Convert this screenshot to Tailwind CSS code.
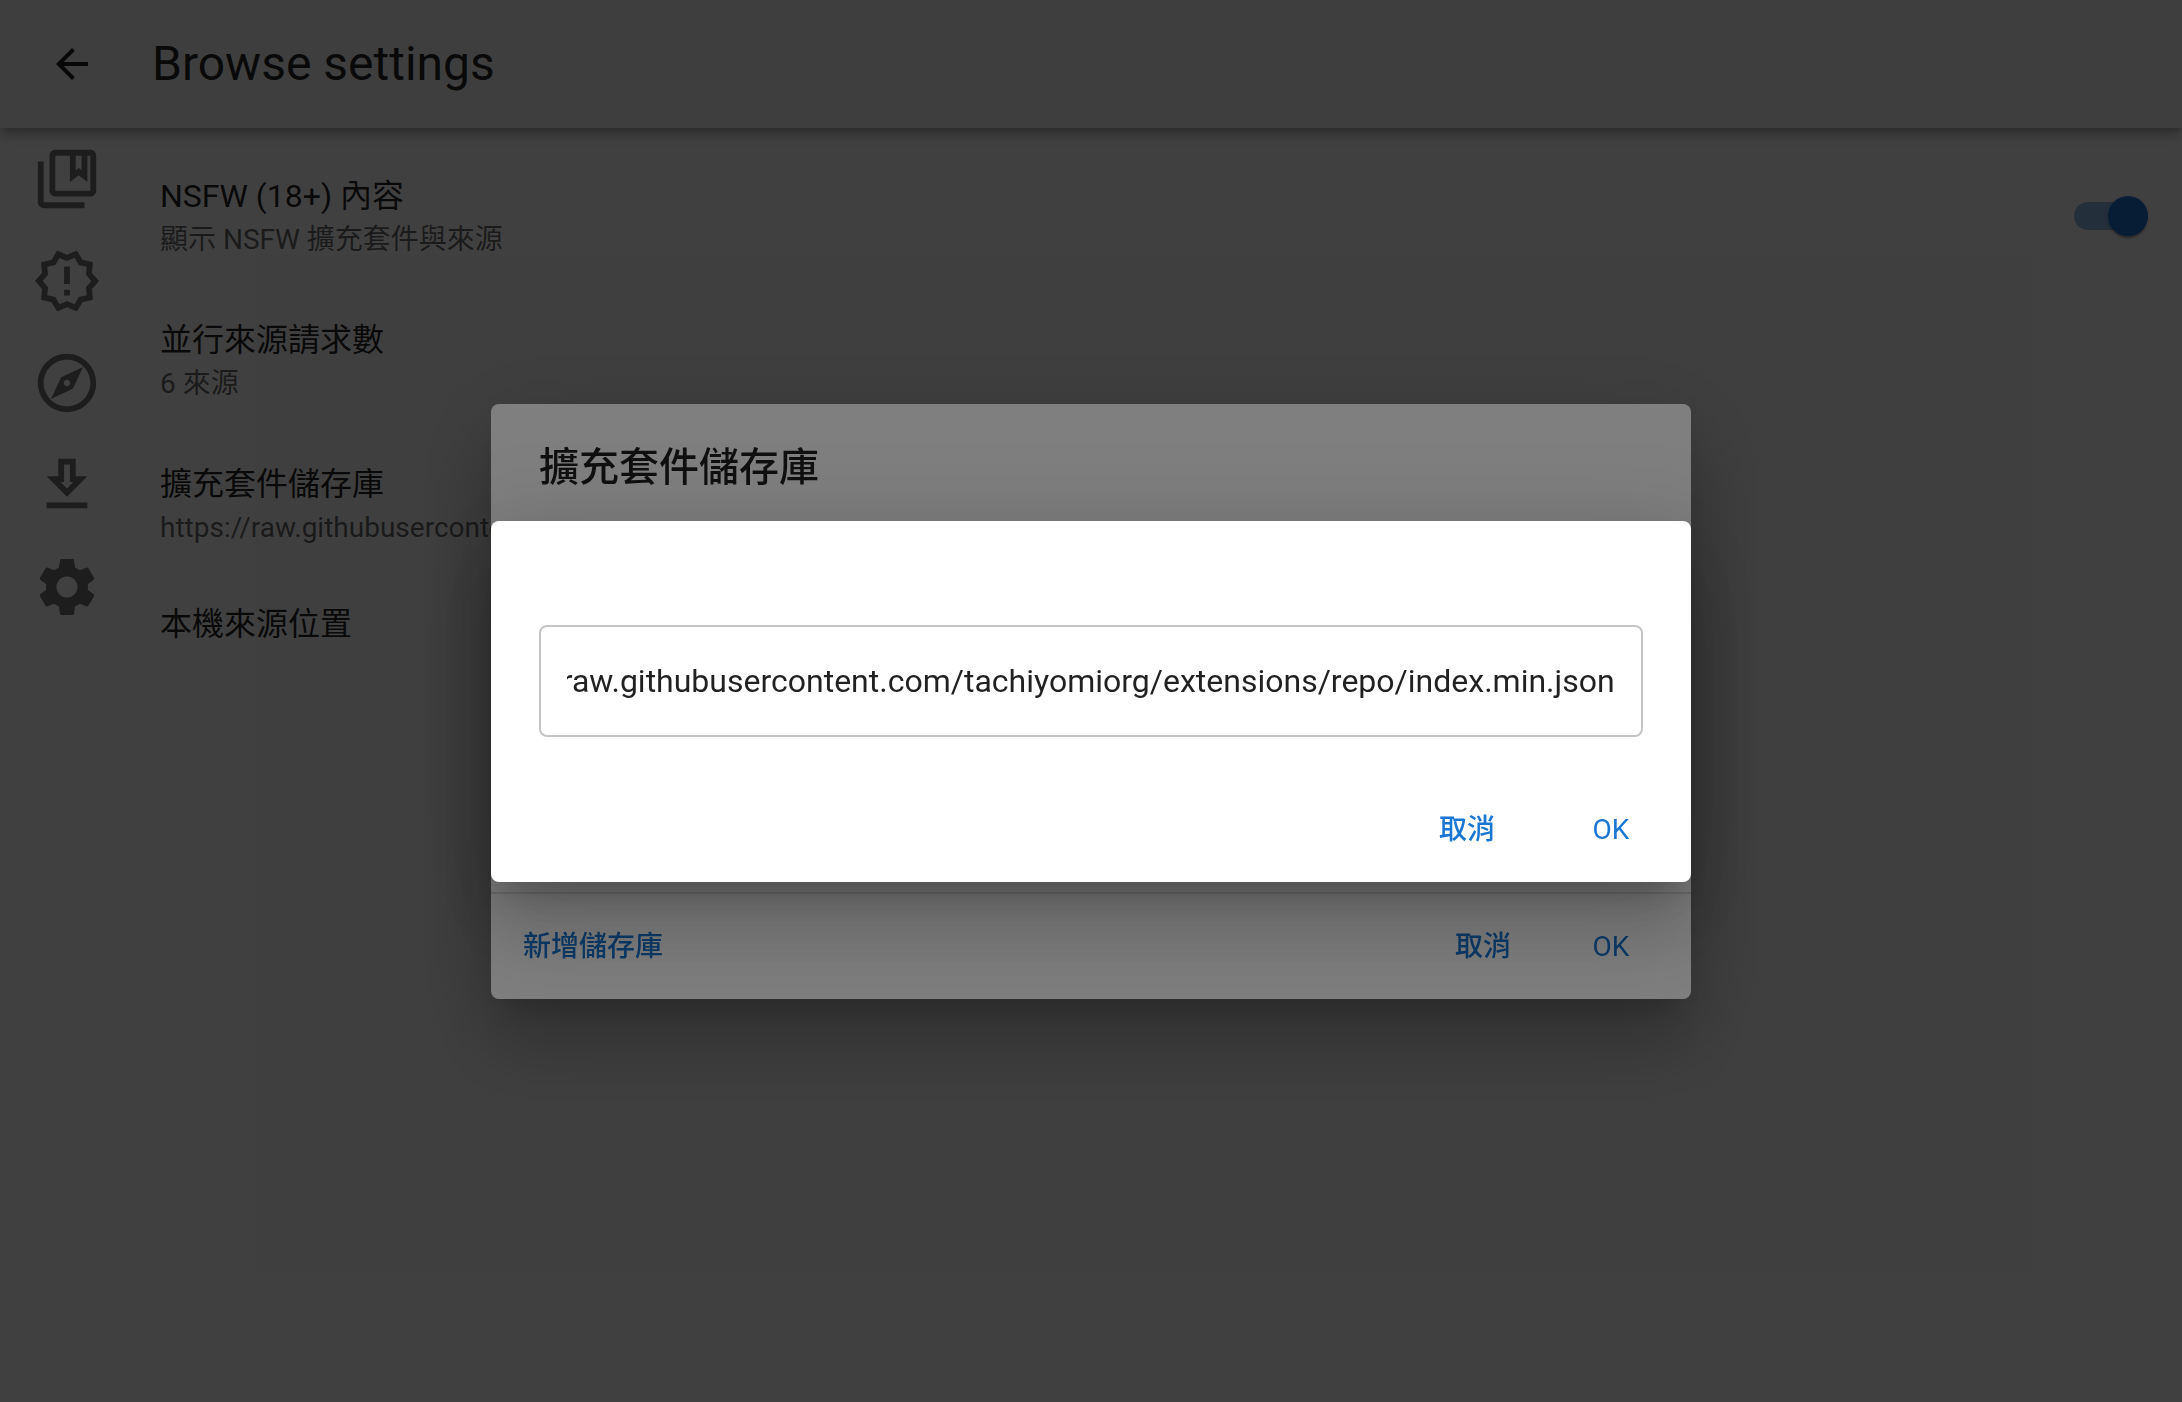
<!DOCTYPE html>
<html lang="zh-Hant">
<head>
    <meta charset="UTF-8">
    <meta name="viewport" content="width=device-width, initial-scale=1.0">
    <title>Browse settings</title>
    <script src="https://cdn.jsdelivr.net/npm/@tailwindcss/browser@4"></script>
</head>
<body class="min-h-screen bg-white font-['Roboto','Noto_Sans_CJK_TC',sans-serif] text-black/87">
    <!-- App bar -->
    <header class="relative flex h-32 items-center bg-[#f5f5f5] px-12 shadow-[0_4px_8px_-2px_rgba(0,0,0,0.2),0_8px_10px_0_rgba(0,0,0,0.14),0_2px_20px_0_rgba(0,0,0,0.12)]">
        <button type="button" aria-label="Back" class="mr-14">
            <svg class="size-12 fill-current" viewBox="0 0 24 24"><path d="M20 11H7.83l5.59-5.59L12 4l-8 8 8 8 1.41-1.41L7.83 13H20v-2z"/></svg>
        </button>
        <h1 class="text-[48px] leading-16">Browse settings</h1>
    </header>

    <div class="flex">
        <!-- Sidebar -->
        <nav class="flex w-32 shrink-0 flex-col gap-8 pt-4 pl-8 text-black/54">
            <a href="#" aria-label="Library">
                <svg class="size-[70px] fill-current" viewBox="0 0 24 24"><path d="M4 6H2v14c0 1.1.9 2 2 2h14v-2H4V6z"/><path d="M20 2H8c-1.1 0-2 .9-2 2v12c0 1.1.9 2 2 2h12c1.1 0 2-.9 2-2V4c0-1.1-.9-2-2-2zm-5 2h2v5l-1-.75L15 9V4zm5 12H8V4h5v9l3-2.25L19 13V4h1v12z"/></svg>
            </a>
            <a href="#" aria-label="Updates">
                <svg class="size-[70px] fill-current" viewBox="0 0 24 24"><path d="M23 12l-2.44-2.78.34-3.68-3.61-.82-1.89-3.18L12 3 8.6 1.54 6.71 4.72l-3.61.81.34 3.68L1 12l2.44 2.78-.34 3.69 3.61.82 1.89 3.18L12 21l3.4 1.46 1.89-3.18 3.61-.82-.34-3.68L23 12zm-4.51 2.11l.26 2.79-2.74.62-1.43 2.41L12 18.82l-2.58 1.11-1.43-2.41-2.74-.62.26-2.8L3.66 12l1.85-2.12-.26-2.78 2.74-.61 1.43-2.41L12 5.18l2.58-1.11 1.43 2.41 2.74.62-.26 2.79L20.34 12l-1.85 2.11zM11 15h2v2h-2zM11 7h2v6h-2z"/></svg>
            </a>
            <a href="#" aria-label="Browse">
                <svg class="size-[70px] fill-current" viewBox="0 0 24 24"><path d="M12 2C6.48 2 2 6.48 2 12s4.48 10 10 10 10-4.48 10-10S17.52 2 12 2zm0 18c-4.41 0-8-3.59-8-8s3.59-8 8-8 8 3.59 8 8-3.59 8-8 8zm-5.5-2.5l7.51-3.49L17.5 6.5 9.99 9.99 6.5 17.5zm5.5-6.6c.61 0 1.1.49 1.1 1.1s-.49 1.1-1.1 1.1-1.1-.49-1.1-1.1.49-1.1 1.1-1.1z"/></svg>
            </a>
            <a href="#" aria-label="Downloads">
                <svg class="size-[70px] fill-current" viewBox="0 0 24 24"><path d="M19 9h-4V3H9v6H5l7 7 7-7zm-8 2V5h2v6h1.17L12 13.17 9.83 11H11zm-6 7h14v2H5z"/></svg>
            </a>
            <a href="#" aria-label="Settings">
                <svg class="size-[70px] fill-current" viewBox="0 0 24 24"><path d="M19.14 12.94c.04-.3.06-.61.06-.94 0-.32-.02-.64-.07-.94l2.03-1.58c.18-.14.23-.41.12-.61l-1.92-3.32c-.12-.22-.37-.29-.59-.22l-2.39.96c-.5-.38-1.03-.7-1.62-.94l-.36-2.54c-.04-.24-.24-.41-.48-.41h-3.84c-.24 0-.43.17-.47.41l-.36 2.54c-.59.24-1.13.57-1.62.94l-2.39-.96c-.22-.08-.47 0-.59.22L2.74 8.87c-.12.21-.08.47.12.61l2.03 1.58c-.05.3-.09.63-.09.94s.02.64.07.94l-2.03 1.58c-.18.14-.23.41-.12.61l1.92 3.32c.12.22.37.29.59.22l2.39-.96c.5.38 1.03.7 1.62.94l.36 2.54c.05.24.24.41.48.41h3.84c.24 0 .44-.17.47-.41l.36-2.54c.59-.24 1.13-.56 1.62-.94l2.39.96c.22.08.47 0 .59-.22l1.92-3.32c.12-.22.07-.47-.12-.61l-2.01-1.58zM12 15.6c-1.98 0-3.6-1.62-3.6-3.6s1.62-3.6 3.6-3.6 3.6 1.62 3.6 3.6-1.62 3.6-3.6 3.6z"/></svg>
            </a>
        </nav>

        <!-- Settings list -->
        <ul class="flex-1 py-4 text-[32px] leading-12">
            <li class="flex items-center justify-between py-7 pr-10 pl-8">
                <label for="nsfw">
                    <span class="block">NSFW (18+) 內容</span>
                    <span class="block text-[28px] leading-10 text-black/60">顯示 NSFW 擴充套件與來源</span>
                </label>
                <input id="nsfw" type="checkbox" checked class="relative h-7 w-[68px] appearance-none rounded-full bg-[#1976d2]/50 after:absolute after:-top-1.5 after:-right-1.5 after:size-10 after:rounded-full after:bg-[#1976d2] after:shadow-[0_4px_2px_-2px_rgba(0,0,0,0.2),0_2px_2px_0_rgba(0,0,0,0.14),0_2px_6px_0_rgba(0,0,0,0.12)]">
            </li>
            <li class="py-7 pl-8">
                <p>並行來源請求數</p>
                <p class="text-[28px] leading-10 text-black/60">6 來源</p>
            </li>
            <li class="py-7 pl-8">
                <p>擴充套件儲存庫</p>
                <p class="text-[28px] leading-10 text-black/60">https://raw.githubusercontent.com/tachiyomiorg/extensions/repo/index.min.json</p>
            </li>
            <li class="py-6 pl-8">
                <p>本機來源位置</p>
            </li>
        </ul>
    </div>

    <!-- Repositories dialog -->
    <div class="fixed inset-0 flex items-center justify-center bg-black/50">
        <div role="dialog" aria-labelledby="repos-title" class="w-full max-w-[1200px] rounded-lg bg-white shadow-[0_22px_30px_-14px_rgba(0,0,0,0.2),0_48px_76px_6px_rgba(0,0,0,0.14),0_18px_92px_16px_rgba(0,0,0,0.12)]">
            <h2 id="repos-title" class="px-12 py-8 text-[40px] leading-16 font-medium">擴充套件儲存庫</h2>
            <div class="h-[362px] border-y-2 border-black/12"></div>
            <div class="flex p-4 text-[28px] leading-[49px] text-[#1976d2]">
                <button type="button" class="mr-auto min-w-32 px-4 py-3 font-medium">新增儲存庫</button>
                <button type="button" class="min-w-32 px-4 py-3 font-medium">取消</button>
                <button type="button" class="min-w-32 px-4 py-3">OK</button>
            </div>
        </div>
    </div>

    <!-- Edit URL dialog -->
    <div class="fixed inset-0 flex items-center justify-center bg-black/50">
        <form role="dialog" aria-label="URL" class="w-full max-w-[1200px] rounded-lg bg-white shadow-[0_22px_30px_-14px_rgba(0,0,0,0.2),0_48px_76px_6px_rgba(0,0,0,0.14),0_18px_92px_16px_rgba(0,0,0,0.12)]">
            <div class="px-12 pt-26 pb-10">
                <input id="url" type="text" aria-label="URL" value="https://raw.githubusercontent.com/tachiyomiorg/extensions/repo/index.min.json" class="block h-28 w-full rounded-lg border-2 border-black/23 px-[26px] text-[32px]">
            </div>
            <div class="flex justify-end gap-4 p-4 text-[28px] leading-[49px] text-[#1976d2]">
                <button type="button" class="min-w-32 px-4 py-3 font-medium">取消</button>
                <button type="button" class="min-w-32 px-4 py-3">OK</button>
            </div>
        </form>
    </div>

    <script>
        // Keep the end of the address in view
        const url = document.getElementById('url');
        url.scrollLeft = url.scrollWidth;
    </script>
</body>
</html>
